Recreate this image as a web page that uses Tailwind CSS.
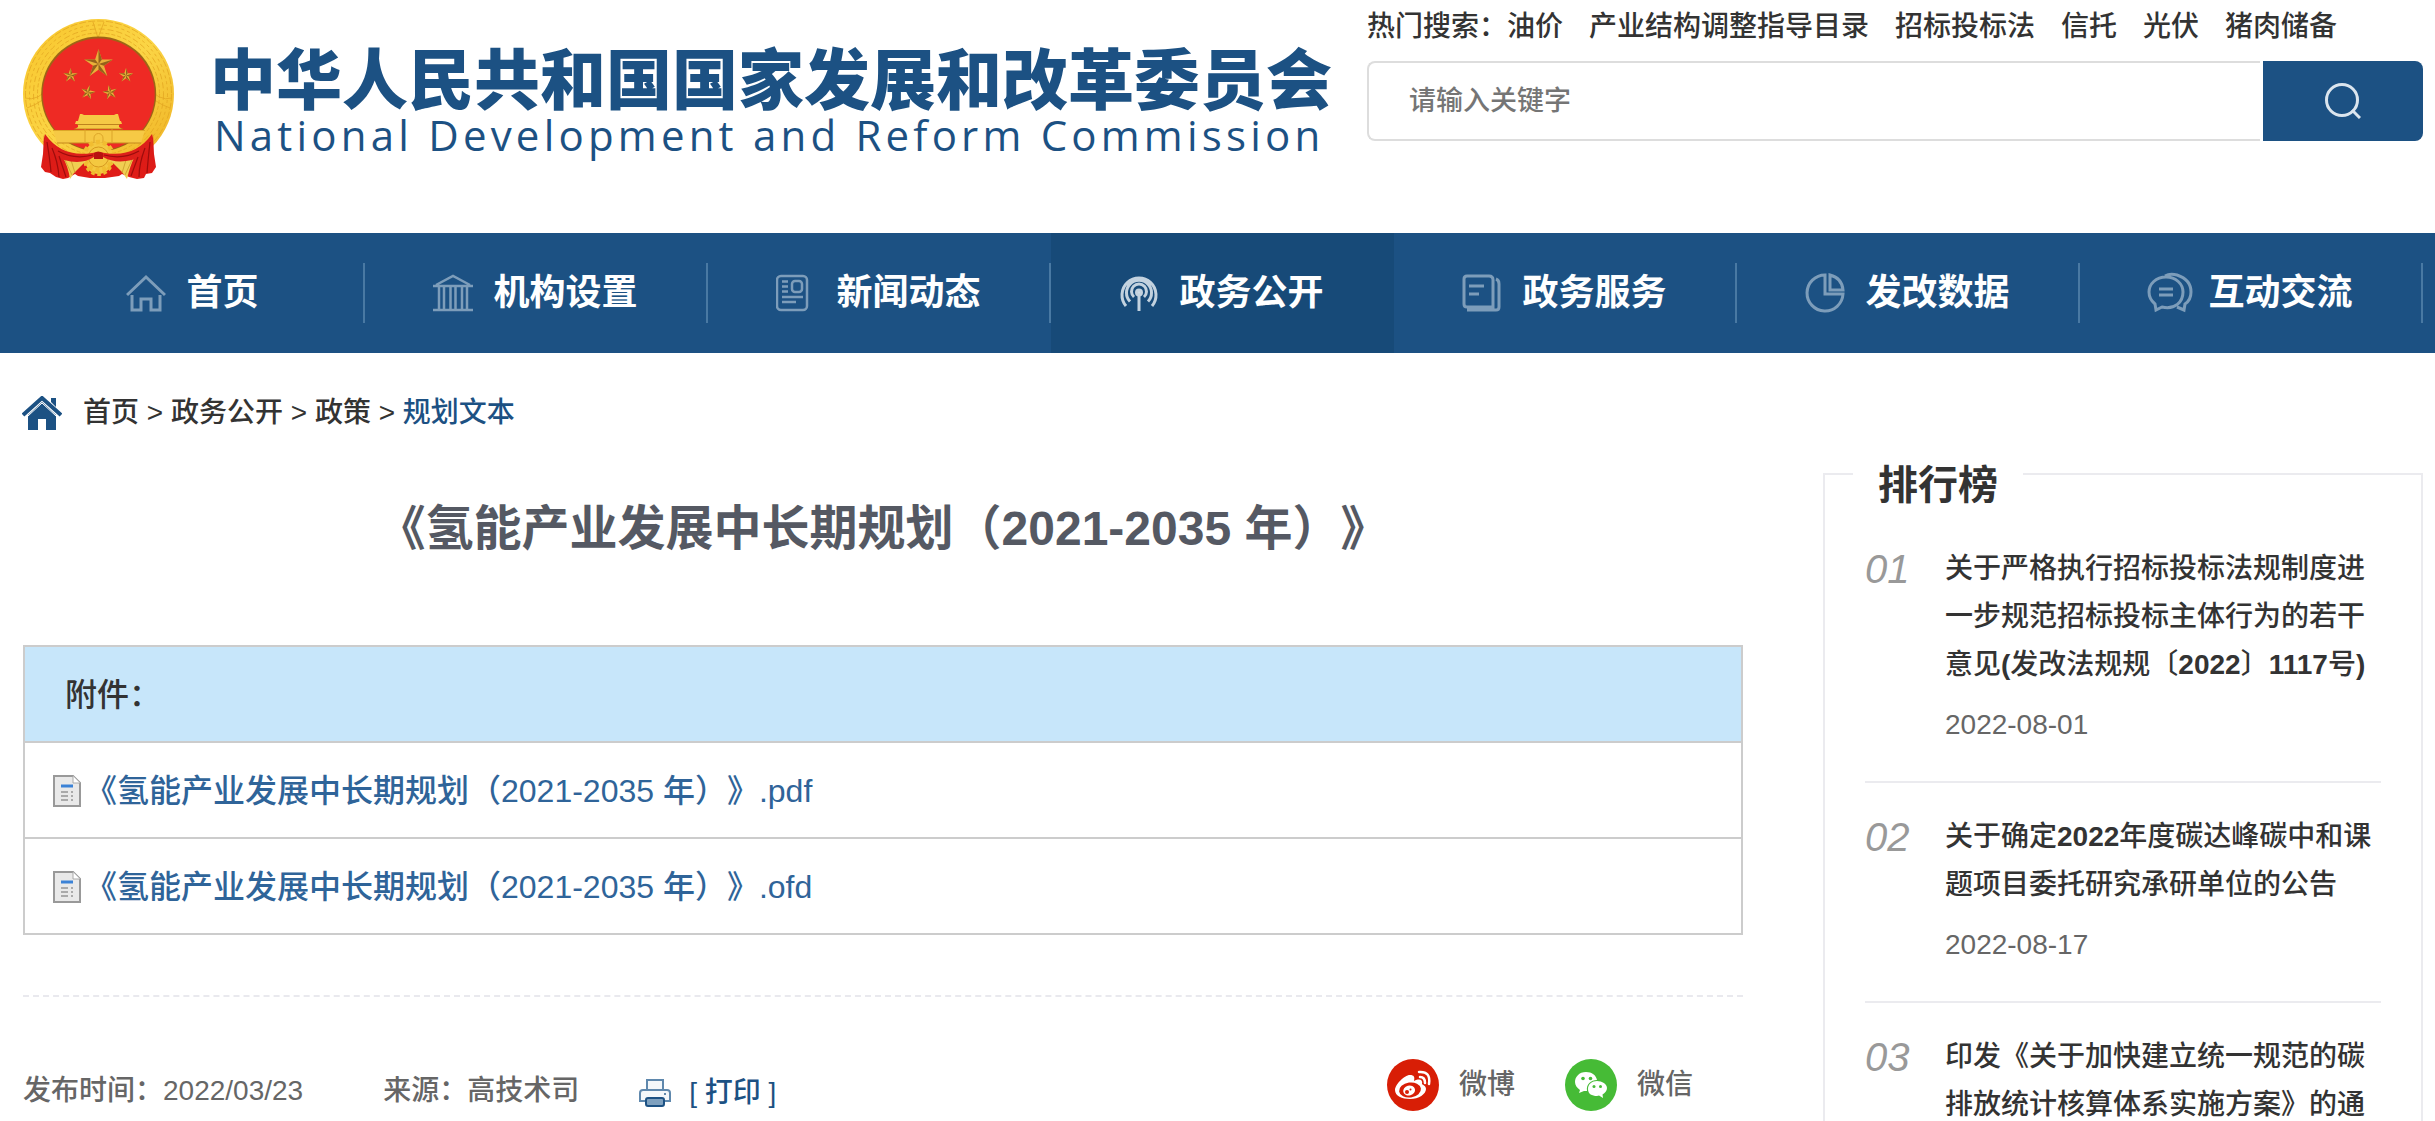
<!DOCTYPE html>
<html lang="zh-CN">
<head>
    <meta charset="UTF-8">
    <meta name="viewport" content="width=device-width, initial-scale=1.0">
    <title>《氢能产业发展中长期规划（2021-2035 年）》-国家发展和改革委员会</title>
    <script src="https://cdn.jsdelivr.net/npm/@tailwindcss/browser@4"></script>
    <style>
        body { font-family: 'Liberation Sans', 'Noto Sans CJK SC', sans-serif; text-spacing-trim: space-all; }
    </style>
</head>
<body class="bg-white text-[#333] font-medium text-[28px] leading-[48px]">
    <header class="flex justify-between pl-[23px] pr-3 h-[233px]">
        <a href="#" class="flex items-start gap-9 pt-[19px]">
            <svg class="w-[151px] h-[161px] shrink-0" viewBox="13 9 151 161" aria-hidden="true">
                <defs>
                    <linearGradient id="gold" x1="0" y1="0" x2="1" y2="1">
                        <stop offset="0" stop-color="#f8c52c"/><stop offset=".5" stop-color="#fbd545"/><stop offset="1" stop-color="#eeb022"/>
                    </linearGradient>
                    <linearGradient id="silk" x1="0" y1="0" x2="0" y2="1">
                        <stop offset="0" stop-color="#d81b17"/><stop offset="1" stop-color="#e01c17"/>
                    </linearGradient>
                    <g id="star">
                        <path d="M0-15 3.4-4.6 14.3-4.6 5.5 1.8 8.8 12.1 0 5.7-8.8 12.1-5.5 1.8-14.3-4.6-3.4-4.6Z" fill="#e8b13a"/>
                        <path d="M0 0V-15L3.4-4.6ZM0 0 14.3-4.6 5.5 1.8ZM0 0 8.8 12.1 0 5.7ZM0 0-8.8 12.1-5.5 1.8ZM0 0-14.3-4.6-3.4-4.6Z" fill="#94611b"/>
                    </g>
                </defs>
                <ellipse cx="88.500" cy="84" rx="75.500" ry="75" fill="url(#gold)"/>
                <g fill="none" stroke="#e3a722" stroke-width=".8">
                    <circle cx="88.500" cy="84" r="73" stroke-dasharray="7 2"/>
                    <circle cx="88.500" cy="84" r="69" stroke-dasharray="3 3"/>
                    <circle cx="88.500" cy="84" r="65" stroke-dasharray="6 3"/>
                    <circle cx="88.500" cy="84" r="61" stroke-dasharray="4 2"/>
                    <path d="M15 88Q28 92 40 76M17 98Q34 92 42 80M162 88Q149 92 137 76M160 98Q143 92 135 80M83 12 88 28 94 12"/>
                </g>
                <circle cx="88.700" cy="84" r="57.500" fill="#9d6516"/>
                <circle cx="88.700" cy="84.500" r="56" fill="#ee2a24"/>
                <use href="#star" transform="translate(88.500 54)"/>
                <use href="#star" transform="translate(60.500 65.500) scale(.5)"/>
                <use href="#star" transform="translate(116 65.500) scale(.5)"/>
                <use href="#star" transform="translate(78 82.500) rotate(12) scale(.5)"/>
                <use href="#star" transform="translate(100 82.500) rotate(-12) scale(.5)"/>
                <path d="M70 104h2l2 1h30l2-1h2l2 7H68ZM66 111h45l1 3H65ZM68 114h41v3l3 2H65l3-2ZM43 120h92L131 133H47Z" fill="#f6c945"/>
                <path d="M67 114.500h43M64 119h49" stroke="#b87a18" stroke-width=".9"/>
                <path d="M43 120.500h92M75 119v13M102 119v13M84 132v-4a4.500 4.500 0 0 1 9 0v4" fill="none" stroke="#d9a126" stroke-width=".9"/>
                <path d="M47 133H131" stroke="#c4871c"/>
                <!-- curtain -->
                <path d="M34 124Q37 140 52 146L70 152H107L125 146Q140 140 143 124L144 144 146 157 142 163 136 164 134 168 127 169 119 167 112 164 109 166 95 168 80 168 68 166 65 164 58 168 53 169 46 167 40 163 35 162 31 157 33 144Z" fill="url(#silk)"/>
                <circle cx="88.500" cy="151" r="13" fill="#f4c840" stroke="#efbb2f" stroke-width="4" stroke-dasharray="3.500 2.500"/>
                <circle cx="88.500" cy="146" r="14" fill="#f4c840" stroke="#f1bd31" stroke-width="4.500" stroke-dasharray="4 3"/>
                <circle cx="88.500" cy="147" r="10" fill="none" stroke="#d6981f"/>
                <path d="M53 152 78 153 64 167 60 173Q58 160 53 152ZM124 152 99 153 112 166 117 173Q120 160 124 152Z" transform="translate(0 -4)" fill="#f0cf52"/>
                <path d="M55 150 62 165M61 150 65 163M122 150 115 165M116 150 112 163" stroke="#c99a2a" stroke-width=".8"/>
                <path d="M35 124Q52 148 82 143L88.500 142 95 143Q125 148 142 124 144 142 122 150 105 154 93 147H84Q72 155 54 150 33 142 35 124Z" fill="#dd1f1a"/>
                <path d="M37 132Q40 150 41 162M42 138Q48 152 49 167M49 146 56 167M140 132Q138 150 137 163M135 138Q129 154 129 167M128 147 121 166M48 141Q64 150 83 145M129 141Q113 150 94 145" fill="none" stroke="#9c0d0c" stroke-width="1.200"/>
                <path d="M84 143Q88 140 93 143V149H84Z" fill="#b81210"/>
            </svg>
            <div class="pt-8 text-[#1c5183] whitespace-nowrap">
                <h1 class="text-[66px] leading-[60px] font-black">中华人民共和国国家发展和改革委员会</h1>
                <p class="pl-1 font-['Open_Sans'] font-normal text-[42px] leading-[48px] tracking-widest">National Development and Reform Commission</p>
            </div>
        </a>
        <div class="w-[1056px] shrink-0">
            <div class="flex gap-[26px] pt-[3px] whitespace-nowrap">
                <p>热门搜索：<a href="#">油价</a></p>
                <a href="#">产业结构调整指导目录</a>
                <a href="#">招标投标法</a>
                <a href="#">信托</a>
                <a href="#">光伏</a>
                <a href="#">猪肉储备</a>
            </div>
            <form class="flex gap-[3px] h-20 mt-2.5">
                <input type="text" aria-label="关键字" placeholder="请输入关键字" class="flex-1 min-w-0 border-2 border-r-0 border-[#ddd] rounded-l-lg pl-10 text-[27px] placeholder:text-[#757575]">
                <button type="submit" aria-label="搜索" class="w-40 bg-[#1c5183] rounded-r-lg flex items-center justify-center">
                    <svg class="size-9" viewBox="0 0 36 36" fill="none" stroke="#dbe5ee" stroke-width="3"><circle cx="17" cy="17" r="15.500"/><path d="M27 27 35 35"/></svg>
                </button>
            </form>
        </div>
    </header>

    <nav class="bg-[#1c5183] text-white font-bold text-4xl pl-[22px] pr-3">
        <ul class="grid grid-cols-7 h-[120px]">
            <li class="flex items-center">
                <a href="#" class="flex-1 flex items-center justify-center gap-5">
                    <svg class="size-10" viewBox="0 0 40 40" fill="none" stroke="#7d9dba" stroke-width="3"><path d="M1 22 20 4 39 22M6 22V37H15V26H25V37H34V22"/></svg>
                    首页
                </a>
                <span class="w-0.5 h-15 bg-[#4979a3]"></span>
            </li>
            <li class="flex items-center">
                <a href="#" class="flex-1 flex items-center justify-center gap-5">
                    <svg class="size-10" viewBox="0 0 40 40" fill="none" stroke="#7d9dba" stroke-width="2.500"><path d="M0 13H40M3 12 20 3 37 12M0 37H40M6 14V36M11 14V36M17.500 14V36M22.500 14V36M29 14V36M34 14V36"/></svg>
                    机构设置
                </a>
                <span class="w-0.5 h-15 bg-[#4979a3]"></span>
            </li>
            <li class="flex items-center">
                <a href="#" class="flex-1 flex items-center justify-center gap-5">
                    <svg class="size-10" viewBox="4 0 40 40" fill="none" stroke="#7d9dba" stroke-width="2.500"><rect x="5" y="3" width="30" height="34" rx="4"/><rect x="20" y="8" width="10" height="11" rx="3"/><path d="M10 8.500h6M10 13.500h6M10 18.500h6M10 24H31M10 29H24"/></svg>
                    新闻动态
                </a>
                <span class="w-0.5 h-15 bg-[#4979a3]"></span>
            </li>
            <li class="flex items-center bg-[#174a78]">
                <a href="#" class="flex-1 flex items-center justify-center gap-5">
                    <svg class="size-10" viewBox="0 0 40 40" fill="none" stroke="#c3d2df" stroke-width="3"><path d="M7 33A17 17 0 1 1 33 33M11 28.500A12.500 12.500 0 1 1 29 28.500M15 24A7.500 7.500 0 1 1 25 24M20 20V38"/><circle cx="20" cy="19.500" r="2.500" fill="#d0dce6"/></svg>
                    政务公开
                </a>
                <span class="w-0.5 h-15"></span>
            </li>
            <li class="flex items-center">
                <a href="#" class="flex-1 flex items-center justify-center gap-5">
                    <svg class="size-10" viewBox="0 0 40 40" fill="none" stroke="#7d9dba" stroke-width="3"><path d="M5 3H27Q31 3 31 7V34H5Q2 34 2 31V6Q2 3 5 3ZM34 6Q37 7 37 11V34Q37 37 34 37H5M7 13H22M7 21H17"/></svg>
                    政务服务
                </a>
                <span class="w-0.5 h-15 bg-[#4979a3]"></span>
            </li>
            <li class="flex items-center">
                <a href="#" class="flex-1 flex items-center justify-center gap-5">
                    <svg class="size-10" viewBox="0 0 40 40" fill="none" stroke="#7d9dba" stroke-width="3"><path d="M20 2A18 18 0 1 0 38 21H20ZM25 2Q37 5 38 17H25Z"/></svg>
                    发改数据
                </a>
                <span class="w-0.5 h-15 bg-[#4979a3]"></span>
            </li>
            <li class="flex items-center">
                <a href="#" class="flex-1 flex items-center justify-center gap-5">
                    <svg class="size-10 overflow-visible" viewBox="0 0 40 40" fill="none" stroke="#7d9dba" stroke-width="3"><path d="M18 4C8 4 1 11 1 19Q1 26 7 31L8 37 14 34C27 37 35 29 35 19 35 11 28 4 18 4ZM17 3Q22 0 29 2C38 5 43 11 43 19Q43 27 37 31L36 37 29 34M11 16H25M11 22H25"/></svg>
                    互动交流
                </a>
                <span class="w-0.5 h-15 bg-[#4979a3]"></span>
            </li>
        </ul>
    </nav>

    <div class="flex items-center pl-[22px] pt-9">
        <svg class="w-10 h-[34px] mr-[21px]" viewBox="0 0 40 34" fill="#1c5183"><path d="M20 6 34 19V34H24V23H16V34H6V19Z"/><path d="M29 2H34V11L29 6Z"/><path d="M1 19 20 2 39 19" fill="none" stroke="#1c5183" stroke-width="4"/><path d="M6 20 20 7 34 20" fill="none" stroke="#fff" stroke-width="1"/></svg>
        <p><a href="#">首页</a> &gt; <a href="#">政务公开</a> &gt; <a href="#">政策</a> &gt; <a href="#" class="text-[#1c5183]">规划文本</a></p>
    </div>

    <main class="flex gap-20 pl-[23px] pr-3 pt-9">
        <article class="flex-1 min-w-0">
            <h2 class="text-5xl leading-[60px] pt-[26px] font-bold text-center text-[#555963]">《氢能产业发展中长期规划（2021-2035 年）》</h2>
            <table class="w-full mt-[86px] text-[32px] text-left border-collapse border-2 border-[#ccc]">
                <thead>
                    <tr class="h-24 bg-[#c7e6fa] border-b-2 border-[#ccc]"><th class="pl-10 pt-0.5 font-medium">附件：</th></tr>
                </thead>
                <tbody class="text-[#2f6499]">
                    <tr class="h-24 border-b-2 border-[#ccc]">
                        <td class="pl-7 pt-0.5"><a href="#" class="flex items-center gap-1">
                            <svg class="w-7 h-8" viewBox="0 0 28 32"><path d="M1 1H20L27 8V31H1Z" fill="#e9e9e9" stroke="#999" stroke-width="2"/><path d="M20 1V8H27" fill="#fff" stroke="#aaa"/><path d="M8 11H20" stroke="#3b82d6" stroke-width="3"/><path d="M8 17h7M18 17h2M8 21h7M18 21h2M8 25h7M18 25h2" stroke="#aaa" stroke-width="2"/></svg>
                            <span>《氢能产业发展中长期规划（2021-2035 年）》.pdf</span>
                        </a></td>
                    </tr>
                    <tr class="h-24">
                        <td class="pl-7 pt-0.5"><a href="#" class="flex items-center gap-1">
                            <svg class="w-7 h-8" viewBox="0 0 28 32"><path d="M1 1H20L27 8V31H1Z" fill="#e9e9e9" stroke="#999" stroke-width="2"/><path d="M20 1V8H27" fill="#fff" stroke="#aaa"/><path d="M8 11H20" stroke="#3b82d6" stroke-width="3"/><path d="M8 17h7M18 17h2M8 21h7M18 21h2M8 25h7M18 25h2" stroke="#aaa" stroke-width="2"/></svg>
                            <span>《氢能产业发展中长期规划（2021-2035 年）》.ofd</span>
                        </a></td>
                    </tr>
                </tbody>
            </table>
            <div class="flex items-center mt-15 pt-14 pr-[50px] border-t-2 border-dashed border-[#e9e9ee] text-[#666]">
                <div class="flex items-center pt-3">
                    <p>发布时间：2022/03/23</p>
                    <p class="ml-20">来源：高技术司</p>
                    <button type="button" class="flex items-center gap-[18px] ml-15 pt-1 text-[#1c5183]">
                        <svg class="w-8 h-7" viewBox="0 0 32 28" fill="#f3f7fa" stroke="#5f88ad" stroke-width="2"><path d="M8 11V1H24V11"/><path d="M4 11H28Q31 11 31 14V22H1V14Q1 11 4 11Z"/><rect x="7" y="19" width="18" height="8" rx="2" fill="#7fa1bf" stroke="#1c5183"/><path d="M25 15h2"/></svg>
                        <span>[ 打印 ]</span>
                    </button>
                </div>
                <a href="#" class="flex items-center gap-5 ml-auto">
                    <svg class="size-[52px]" viewBox="0 0 52 52"><circle cx="26" cy="26" r="26" fill="#d81e06"/><path d="M23 16C17 16 8 26 8 31 8 37 15 40 23 40 32 40 39 35 39 30 39 27 36 26 35 25 36 21 33 19 27 22 28 18 27 16 23 16Z" fill="#fff"/><ellipse cx="23" cy="31" rx="11" ry="7.500" transform="rotate(-8 23 31)" fill="#d81e06"/><ellipse cx="22" cy="31.500" rx="6" ry="5" transform="rotate(-15 22 31)" fill="#fff"/><circle cx="20" cy="33" r="2" fill="#d81e06"/><circle cx="23.500" cy="30.500" r="1" fill="#d81e06"/><path d="M32 13Q44 12 42 25M33 18Q38 18 38 24" fill="none" stroke="#fff" stroke-width="2.500" stroke-linecap="round"/></svg>
                    微博
                </a>
                <a href="#" class="flex items-center gap-5 ml-[50px]">
                    <svg class="size-[52px]" viewBox="0 0 52 52"><circle cx="26" cy="26" r="26" fill="#46bb36"/><path d="M21 13C14 13 10 18 10 23 10 26 12 29 15 31L14 34 19 32H22C21 25 26 21 32 21 31 16 27 13 21 13Z" fill="#fff"/><path d="M32 22C27 22 23 25 23 30S27 37 32 37L34 36.500 38 39 37.500 35.500C40 34 42 32 42 29 42 25 37 22 32 22Z" fill="#fff"/><g fill="#46bb36"><circle cx="18" cy="19.500" r="1.800"/><circle cx="25.500" cy="19.500" r="1.800"/><circle cx="29" cy="27.500" r="1.500"/><circle cx="35.500" cy="27.500" r="1.500"/></g></svg>
                    微信
                </a>
            </div>
        </article>

        <aside class="w-[600px] shrink-0 border-2 border-[#ebebef] px-10">
            <h3 class="w-fit -mt-3.5 mb-1.5 -ml-3 px-[25px] bg-white text-[40px] font-bold">排行榜</h3>
            <ol>
                <li class="flex pt-[30px] pb-8 border-b-2 border-[#ebebef]">
                    <em class="w-20 shrink-0 text-[40px] font-normal text-[#999]">01</em>
                    <div>
                        <a href="#">关于严格执行招标投标法规制度进一步规范招标投标主体行为的若干意见<b>(</b>发改法规规〔<b>2022</b>〕<b>1117</b>号<b>)</b></a>
                        <p class="mt-3 text-[#666]">2022-08-01</p>
                    </div>
                </li>
                <li class="flex pt-[30px] pb-8 border-b-2 border-[#ebebef]">
                    <em class="w-20 shrink-0 text-[40px] font-normal text-[#999]">02</em>
                    <div>
                        <a href="#">关于确定<b>2022</b>年度碳达峰碳中和课题项目委托研究承研单位的公告</a>
                        <p class="mt-3 text-[#666]">2022-08-17</p>
                    </div>
                </li>
                <li class="flex pt-[30px]">
                    <em class="w-20 shrink-0 text-[40px] font-normal text-[#999]">03</em>
                    <div>
                        <a href="#">印发《关于加快建立统一规范的碳排放统计核算体系实施方案》的通知</a>
                    </div>
                </li>
            </ol>
        </aside>
    </main>
</body>
</html>
